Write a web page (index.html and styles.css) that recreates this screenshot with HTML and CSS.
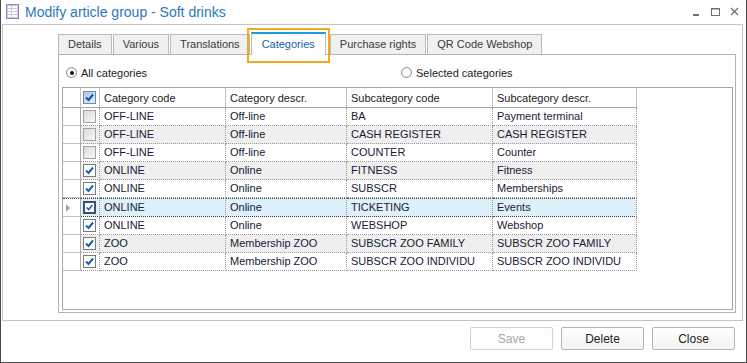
FILE: index.html
```html
<!DOCTYPE html>
<html>
<head>
  <title>Modify article group - Soft drinks</title>
  <link rel="stylesheet" href="styles.css">
</head>
<body>
  <div class="window">
    <div class="titlebar">
      <svg class="app-icon" width="13" height="15" viewBox="0 0 13 15">
        <rect x="0.5" y="0.5" width="12" height="14" fill="#c9c9e0" stroke="#8a8ab0"/>
        <rect x="2" y="2" width="3" height="2" fill="#fff"/>
        <rect x="6" y="2" width="5" height="2" fill="#fff"/>
        <rect x="2" y="5" width="3" height="2" fill="#fff"/>
        <rect x="6" y="5" width="5" height="2" fill="#fff"/>
        <rect x="2" y="8" width="3" height="2" fill="#fff"/>
        <rect x="6" y="8" width="5" height="2" fill="#fff"/>
        <rect x="2" y="11" width="3" height="2" fill="#fff"/>
        <rect x="6" y="11" width="5" height="2" fill="#fff"/>
      </svg>
      <span class="title">Modify article group - Soft drinks</span>
      <div class="controls">
        <svg width="10" height="10" viewBox="0 0 10 10"><rect x="1" y="7" width="6" height="2" fill="#707070"/></svg>
        <svg width="10" height="10" viewBox="0 0 10 10"><rect x="0.5" y="1.5" width="8" height="7" fill="none" stroke="#707070"/><rect x="0.5" y="1.5" width="8" height="1" fill="#707070"/></svg>
        <svg width="10" height="10" viewBox="0 0 10 10"><path d="M1 1 L8 8 M8 1 L1 8" stroke="#707070" stroke-width="1.3"/></svg>
      </div>
    </div>

    <div class="panel">
      <div class="tabs">
        <div class="tab">Details</div>
        <div class="tab">Various</div>
        <div class="tab tab-gap">Translations</div>
        <div class="tab active">Categories</div>
        <div class="tab">Purchase rights</div>
        <div class="tab">QR Code Webshop</div>
      </div>

      <div class="tab-page">
        <div class="radio-row">
          <label class="radio-label"><span class="radio checked"></span>All categories</label>
          <label class="radio-label"><span class="radio"></span>Selected categories</label>
        </div>

        <div class="grid">
          <table class="grid-table">
            <thead>
              <tr>
                <th class="col-ind"></th>
                <th class="col-cb"><span class="cb cb-head"><svg width="11" height="11" viewBox="0 0 11 11"><path d="M2 5.5 L4.5 8 L9 2.5" fill="none" stroke="#1a4f9c" stroke-width="2"/></svg></span></th>
                <th class="col-code">Category code</th>
                <th class="col-descr">Category descr.</th>
                <th class="col-sub">Subcategory code</th>
                <th class="col-subdescr">Subcategory descr.</th>
              </tr>
            </thead>
            <tbody id="rows"></tbody>
          </table>
        </div>
      </div>
    </div>

    <div class="footer">
      <button class="btn" disabled>Save</button>
      <button class="btn">Delete</button>
      <button class="btn">Close</button>
    </div>
  </div>

  <script>
    var rows = [
      { on: false, code: 'OFF-LINE', descr: 'Off-line', sub: 'BA', subDescr: 'Payment terminal' },
      { on: false, code: 'OFF-LINE', descr: 'Off-line', sub: 'CASH REGISTER', subDescr: 'CASH REGISTER' },
      { on: false, code: 'OFF-LINE', descr: 'Off-line', sub: 'COUNTER', subDescr: 'Counter' },
      { on: true, code: 'ONLINE', descr: 'Online', sub: 'FITNESS', subDescr: 'Fitness' },
      { on: true, code: 'ONLINE', descr: 'Online', sub: 'SUBSCR', subDescr: 'Memberships' },
      { on: true, code: 'ONLINE', descr: 'Online', sub: 'TICKETING', subDescr: 'Events', current: true },
      { on: true, code: 'ONLINE', descr: 'Online', sub: 'WEBSHOP', subDescr: 'Webshop' },
      { on: true, code: 'ZOO', descr: 'Membership ZOO', sub: 'SUBSCR ZOO FAMILY', subDescr: 'SUBSCR ZOO FAMILY' },
      { on: true, code: 'ZOO', descr: 'Membership ZOO', sub: 'SUBSCR ZOO INDIVIDU', subDescr: 'SUBSCR ZOO INDIVIDU' }
    ];

    var check = '<svg width="11" height="11" viewBox="0 0 11 11"><path d="M2 5.5 L4.5 8 L9 2.5" fill="none" stroke="#1a5fb4" stroke-width="2"/></svg>';
    var html = '';

    rows.forEach(function(row, i) {
      var cls = i % 2 == 1 ? 'alt' : '';
      if (row.current) cls = 'current';
      html += '<tr class="' + cls + '">' +
        '<td class="ind">' + (row.current ? '<span class="arrow"></span>' : '') + '</td>' +
        '<td class="cell-cb"><span class="cb' + (row.on ? ' on' : '') + '">' + (row.on ? check : '') + '</span></td>' +
        '<td>' + row.code + '</td>' +
        '<td>' + row.descr + '</td>' +
        '<td>' + row.sub + '</td>' +
        '<td>' + row.subDescr + '</td>' +
        '</tr>';
    });

    document.getElementById('rows').innerHTML = html;
  </script>
</body>
</html>
```

FILE: styles.css
```css
body {
  margin: 0;
  background-color: #fff;
  font-family: "Liberation Sans", Arial, sans-serif;
  font-size: 11px;
  color: #1a1a36;
}

.window {
  width: 747px;
  height: 363px;
  box-sizing: border-box;
  border: 1px solid #4a4a4a;
  border-top: none;
  display: flex;
  flex-direction: column;
}

/* title bar */
.titlebar {
  height: 24px;
  display: flex;
  align-items: center;
  padding-left: 5px;
}

.app-icon {
  margin-top: -1px;
}

.title {
  margin-left: 6px;
  font-size: 14px;
  color: #2a78c0;
}

.controls {
  margin-left: auto;
  margin-right: 6px;
  display: flex;
  gap: 9px;
}

/* main panel */
.panel {
  height: 297px;
  margin: 0 3px 0 1px;
  box-sizing: border-box;
  border: 1px solid #c4c4c4;
  padding: 7px 6px 0 55px;
}

.tabs {
  height: 22px;
  display: flex;
  align-items: flex-end;
}

.tab {
  height: 20px;
  box-sizing: border-box;
  padding: 0 9px;
  line-height: 18px;
  border: 1px solid #bababa;
  border-bottom: none;
  background-color: #f0f0f0;
  color: #3a3a3a;
}

.tab + .tab {
  margin-left: 1px;
}

.tab-gap {
  margin-left: 2px;
}

.tab.active {
  position: relative;
  height: 23px;
  margin: 0 3px -1px 1px;
  padding: 0 10px;
  line-height: 20px;
  background-color: #fff;
  border-top: 2px solid #1e9be8;
  color: #1a5fa8;
  z-index: 1;
}

.tab.active::after {
  content: "";
  position: absolute;
  left: -5px;
  right: -5px;
  top: -6px;
  bottom: -8px;
  border: 2px solid #f4a81d;
}

.tab-page {
  height: 259px;
  box-sizing: border-box;
  border: 1px solid #b4b4b4;
  padding: 0 2px 2px 3px;
  display: flex;
  flex-direction: column;
}

.radio-row {
  height: 32px;
  box-sizing: border-box;
  padding: 5px 0 0 4px;
  display: grid;
  grid-template-columns: 335px auto;
  align-items: center;
}

.radio-label {
  display: flex;
  align-items: center;
  gap: 4px;
  color: #222;
  font-size: 11px;
  padding-bottom: 2px;
}

.radio {
  width: 11px;
  height: 11px;
  box-sizing: border-box;
  border: 1px solid #8c8c8c;
  border-radius: 50%;
  background: radial-gradient(circle, #fff 40%, #e4e4e4);
  position: relative;
}

.radio.checked::after {
  content: "";
  position: absolute;
  left: 2.5px;
  top: 2.5px;
  width: 4px;
  height: 4px;
  border-radius: 50%;
  background-color: #111;
}

/* grid */
.grid {
  flex: 1;
  border: 1px solid #a8a8a8;
  background-color: #fff;
}

.grid-table {
  width: 574px;
  table-layout: fixed;
  border-spacing: 0;
}

.grid-table th,
.grid-table td {
  box-sizing: border-box;
  padding: 0 0 0 4px;
  text-align: left;
  white-space: nowrap;
  overflow: hidden;
}

.grid-table th {
  height: 20px;
  font-weight: normal;
  color: #222;
  border-right: 1px solid #c2c2c2;
  border-bottom: 1px solid #a8a8a8;
}

.grid-table td {
  height: 18px;
  line-height: 17px;
  border-right: 1px dotted #9a9a9a;
  border-bottom: 1px dotted #9a9a9a;
}

.col-ind { width: 18px; }
.col-cb { width: 19px; }
.col-code { width: 126px; }
.col-descr { width: 121px; }
.col-sub { width: 146px; }
.col-subdescr { width: 144px; }

.grid-table td.ind {
  border-right: 1px solid #a8a8a8;
  border-bottom: 1px solid #c2c2c2;
  background-color: #fff;
  padding: 0 0 0 3px;
}

.grid-table .col-cb,
.grid-table .cell-cb {
  padding: 0 0 0 2px;
}

.alt td {
  background-color: #efefef;
}

.current td {
  background-color: #def0fa;
  border-top: 1px dotted #444;
  border-bottom: 1px dotted #444;
  height: 18px;
}

.arrow {
  display: block;
  width: 0;
  height: 0;
  border-top: 4px solid transparent;
  border-bottom: 4px solid transparent;
  border-left: 4px solid #a0a0a0;
}

.cb {
  display: flex;
  align-items: center;
  justify-content: center;
  width: 13px;
  height: 13px;
  box-sizing: border-box;
  border: 1px solid #a2a2a2;
  background: linear-gradient(135deg, #dadada, #f8f8f8);
}

.cb.on {
  border-color: #7a7a7a;
  background: #fff;
}

.current .cb {
  border: 2px solid #3e4f66;
}

.cb-head {
  border-color: #7a8aa0;
  background: linear-gradient(135deg, #a9c6ec, #e3eefb);
}

/* footer */
.footer {
  flex: 1;
  display: flex;
  justify-content: flex-end;
  align-items: flex-start;
  gap: 8px;
  padding: 6px 11px 0 0;
}

.btn {
  width: 83px;
  height: 23px;
  font-family: "Liberation Sans", Arial, sans-serif;
  font-size: 12px;
  color: #222;
  border: 1px solid #b4b4b4;
  border-radius: 2px;
  background: linear-gradient(#ffffff, #f3f3f3);
}

.btn:disabled {
  color: #a8a8a8;
  border-color: #d2d2d2;
  background: #fdfdfd;
}
```
